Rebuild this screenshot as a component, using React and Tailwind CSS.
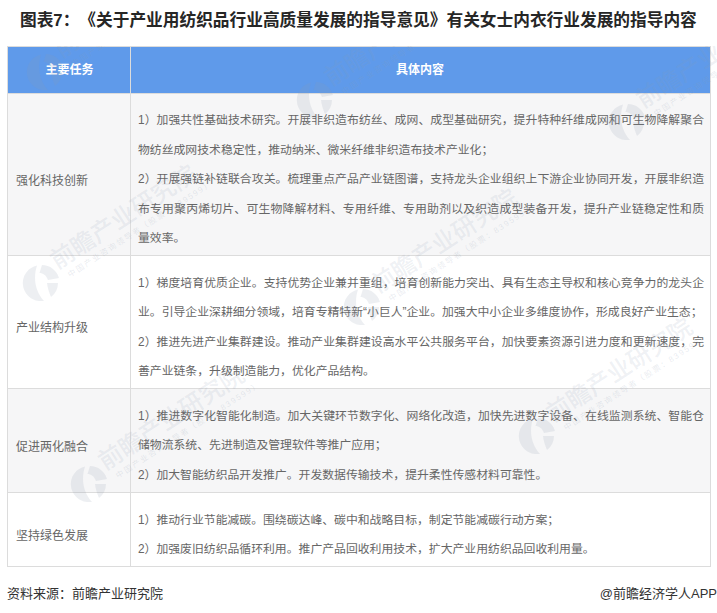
const rows = [
  { name: "强化科技创新", bg: "bg-[#f6f6f7]", h: "h-[162px]", lines: [
    "1）加强共性基础技术研究。开展非织造布纺丝、成网、成型基础研究，提升特种纤维成网和可生物降解聚合物纺丝成网技术稳定性，推动纳米、微米纤维非织造布技术产业化；",
    "2）开展强链补链联合攻关。梳理重点产品产业链图谱，支持龙头企业组织上下游企业协同开发，开展非织造布专用聚丙烯切片、可生物降解材料、专用纤维、专用助剂以及织造成型装备开发，提升产业链稳定性和质量效率。",
  ]},
  { name: "产业结构升级", bg: "bg-white", h: "h-[133px]", lines: [
    "1）梯度培育优质企业。支持优势企业兼并重组，培育创新能力突出、具有生态主导权和核心竞争力的龙头企业。引导企业深耕细分领域，培育专精特新“小巨人”企业。加强大中小企业多维度协作，形成良好产业生态；",
    "2）推进先进产业集群建设。推动产业集群建设高水平公共服务平台，加快要素资源引进力度和更新速度，完善产业链条，升级制造能力，优化产品结构。",
  ]},
  { name: "促进两化融合", bg: "bg-[#f6f6f7]", h: "h-[104px]", lines: [
    "1）推进数字化智能化制造。加大关键环节数字化、网络化改造，加快先进数字设备、在线监测系统、智能仓储物流系统、先进制造及管理软件等推广应用；",
    "2）加大智能纺织品开发推广。开发数据传输技术，提升柔性传感材料可靠性。",
  ]},
  { name: "坚持绿色发展", bg: "bg-white", h: "h-[74px]", lines: [
    "1）推动行业节能减碳。围绕碳达峰、碳中和战略目标，制定节能减碳行动方案；",
    "2）加强废旧纺织品循环利用。推广产品回收利用技术，扩大产业用纺织品回收利用量。",
  ]},
];

const marks = [
  "left-[45px] top-[26px]",
  "left-[315px] top-[54px]",
  "left-[627px] top-[76px]",
  "left-[41px] top-[237px]",
  "left-[362px] top-[261px]",
  "left-[537px] top-[390px]",
  "left-[89px] top-[438px]",
];

function Mark({ pos }) {
  return (
    <div className={`absolute w-0 h-0 ${pos}`}>
      <svg className="absolute left-[-19px] top-[-19px]" width="38" height="38" viewBox="0 0 38 38">
        <path d="M15 1.5A18 18 0 0 0 17 37L22 37C13 27 11 14 15 1.5Z" fill="#8c9ab0" fillOpacity="0.16" />
        <path d="M20 1A18 18 0 0 1 37 14L26 16C24 11 21 9 17.5 9Z" fill="#8c9ab0" fillOpacity="0.16" />
        <path d="M25 19L36 19A18 18 0 0 1 29 33C27 28 25.500 24 25 19Z" fill="#8c9ab0" fillOpacity="0.16" />
      </svg>
      <div className="absolute left-[12px] top-[-34px] origin-left -rotate-[33deg] whitespace-nowrap text-[24px] leading-[28px] font-medium text-[#8c9ab0]/15">
        前瞻产业研究院
      </div>
      <div className="absolute left-[28px] top-[-12px] origin-left -rotate-[33deg] whitespace-nowrap text-[8px] leading-[10px] tracking-[1.6px] text-[#8c9ab0]/20">
        中国产业咨询领导者（股票：839599）
      </div>
    </div>
  );
}

export default function App() {
  return (
    <div className="relative w-[717px] h-[613px] overflow-hidden bg-white [text-spacing-trim:space-all] font-['Liberation_Sans','Noto_Sans_CJK_SC',sans-serif]">
      <h1 className="pl-[20px] pt-[10px] h-[46px] text-[16.7px] leading-[22px] font-bold text-[#262626] whitespace-nowrap">
        图表7：《关于产业用纺织品行业高质量发展的指导意见》有关女士内衣行业发展的指导内容
      </h1>
      <div className="ml-[7px] w-[704px] border border-[#dcdcdc] border-b-0">
        <div className="grid grid-cols-[123px_1fr] h-[47px] bg-[#5f9aea] border-b border-[#dcdcdc] text-[12px] font-bold text-white">
          <div className="flex items-center justify-center border-r border-[#dcdcdc] pl-[1px]">主要任务</div>
          <div className="flex items-center justify-center pr-[1px]">具体内容</div>
        </div>
        {rows.map((r) => (
          <div key={r.name} className={`grid grid-cols-[123px_1fr] ${r.h} ${r.bg} border-b border-[#dcdcdc] text-[11.85px] text-[#666666]`}>
            <div className="flex items-center pl-[8px] pt-[12px] border-r border-[#dcdcdc] text-[12px]">{r.name}</div>
            <div className="flex flex-col justify-center pl-[7px] pr-[6px] pt-[11px] leading-[29.5px] text-justify">
              {r.lines.map((l) => <p key={l}>{l}</p>)}
            </div>
          </div>
        ))}
      </div>
      <div className="flex justify-between pl-[7px] pt-[18px] text-[13px] leading-[18px] text-[#333333]">
        <span>资料来源：前瞻产业研究院</span>
        <span>@前瞻经济学人APP</span>
      </div>
      <div className="pointer-events-none absolute inset-x-0 top-[46px] bottom-[50px] overflow-hidden">
        {marks.map((p) => <Mark key={p} pos={p} />)}
      </div>
    </div>
  );
}
